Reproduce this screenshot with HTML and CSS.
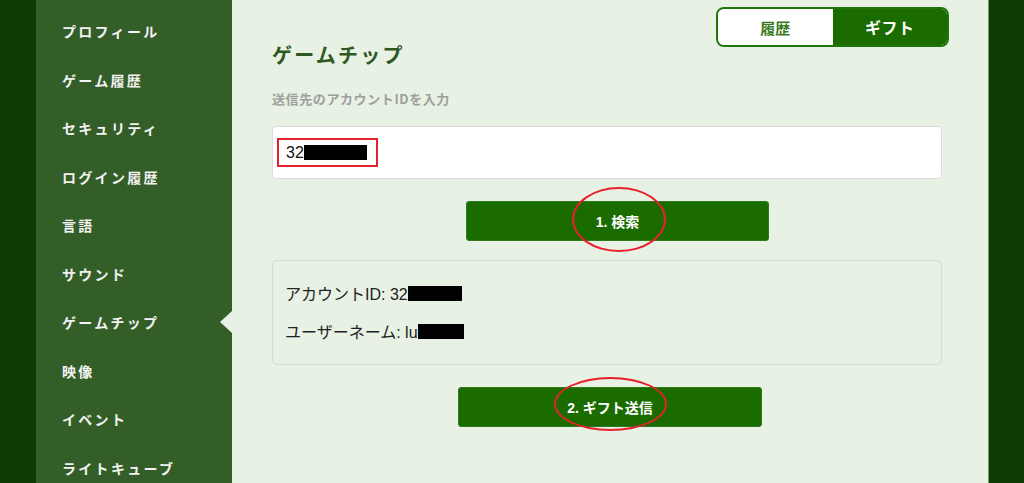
FILE: index.html
```html
<!DOCTYPE html>
<html lang="ja">
<head>
    <meta charset="UTF-8">
    <meta name="viewport" content="width=device-width, initial-scale=1.0">
    <title>ゲームチップ</title>
    <link rel="stylesheet" href="styles.css">
</head>
<body>
    <div class="page">
        <div class="edge"></div>

        <nav class="sidebar">
            <a class="nav-item">プロフィール</a>
            <a class="nav-item">ゲーム履歴</a>
            <a class="nav-item">セキュリティ</a>
            <a class="nav-item">ログイン履歴</a>
            <a class="nav-item">言語</a>
            <a class="nav-item">サウンド</a>
            <a class="nav-item active">ゲームチップ</a>
            <a class="nav-item">映像</a>
            <a class="nav-item">イベント</a>
            <a class="nav-item">ライトキューブ</a>
        </nav>

        <main class="main">
            <div class="main-head">
                <h1 class="title">ゲームチップ</h1>
                <div class="tabs">
                    <div class="tab">履歴</div>
                    <div class="tab tab-on">ギフト</div>
                </div>
            </div>

            <p class="label">送信先のアカウントIDを入力</p>

            <div class="id-input">
                <span class="marked">32<span class="redact redact-input"></span></span>
            </div>

            <button class="btn btn-search">
                1. 検索
                <span class="circle circle-search"></span>
            </button>

            <div class="result">
                <div class="result-row">アカウントID: 32<span class="redact redact-id"></span></div>
                <div class="result-row">ユーザーネーム: lu<span class="redact redact-name"></span></div>
            </div>

            <button class="btn btn-send">
                2. ギフト送信
                <span class="circle circle-send"></span>
            </button>
        </main>

        <div class="edge edge-right"></div>
    </div>
</body>
</html>
```

FILE: styles.css
```css
html, body {
    margin: 0;
    height: 100%;
    overflow: hidden;
}
body {
    font-family: "Liberation Sans", "Noto Sans CJK JP", sans-serif;
    background-color: #0e3a03;
}
.page {
    display: flex;
    height: 483px;
}
.edge {
    width: 36px;
    flex-shrink: 0;
    background-color: #0e3a03;
}
.edge-right {
    border-left: 1px solid #7d9a73;
    width: 35px;
}

/* sidebar */
.sidebar {
    width: 196px;
    flex-shrink: 0;
    background-color: #345e28;
    padding-top: 7px;
    box-sizing: border-box;
}
.nav-item {
    position: relative;
    display: flex;
    align-items: center;
    height: 48.5px;
    padding-left: 26px;
    color: #f2f2f2;
    font-family: "Noto Sans CJK JP", sans-serif;
    font-size: 14px;
    font-weight: bold;
    letter-spacing: 2.3px;
}
.nav-item.active::after {
    content: "";
    position: absolute;
    right: 0;
    top: 50%;
    margin-top: -11px;
    border-top: 11px solid transparent;
    border-bottom: 11px solid transparent;
    border-right: 12px solid #e7f1e4;
}

/* main */
.main {
    flex: 1;
    background-color: #e7f1e4;
    padding: 7px 46px 0 40px;
}
.main-head {
    display: flex;
    justify-content: space-between;
    align-items: flex-start;
}
.title {
    margin: 34px 0 0;
    font-family: "Noto Sans CJK JP", sans-serif;
    font-size: 20px;
    line-height: 28px;
    font-weight: bold;
    letter-spacing: 2.2px;
    color: #2e5a22;
}
.tabs {
    display: flex;
    width: 233px;
    height: 40px;
    box-sizing: border-box;
    margin-right: -7px;
    border: 2px solid #1e7409;
    border-radius: 8px;
    overflow: hidden;
}
.tab {
    flex: 1;
    display: flex;
    align-items: center;
    justify-content: center;
    background: white;
    color: #3a7a1c;
    font-family: "Noto Sans CJK JP", sans-serif;
    font-size: 15px;
    font-weight: bold;
}
.tab-on {
    background-color: #1a6b00;
    color: white;
    font-size: 16px;
    letter-spacing: 0.5px;
}
.label {
    margin: 20px 0 17px;
    font-family: "Noto Sans CJK JP", sans-serif;
    font-size: 13px;
    line-height: 20px;
    font-weight: bold;
    letter-spacing: 0.6px;
    color: #9d9f9c;
}
.id-input {
    display: flex;
    align-items: center;
    height: 53px;
    box-sizing: border-box;
    padding-left: 4px;
    background: white;
    border: 1px solid #dcdcdc;
    border-radius: 4px;
}
.marked {
    display: inline-flex;
    align-items: center;
    height: 29px;
    box-sizing: border-box;
    padding: 0 9px 0 7px;
    border: 2px solid #e3202b;
    font-size: 16px;
    color: #111;
}
.redact {
    display: inline-block;
    height: 15px;
    background: #000;
    vertical-align: middle;
}
.redact-input {
    width: 63px;
}
.redact-id {
    width: 54px;
}
.redact-name {
    width: 46px;
}

/* buttons */
.btn {
    position: relative;
    display: block;
    width: 303px;
    height: 40px;
    border: 1px solid #2f7a1c;
    border-radius: 3px;
    background-color: #1a6b00;
    color: white;
    font-family: "Liberation Sans", "Noto Sans CJK JP", sans-serif;
    font-size: 14px;
    font-weight: bold;
    cursor: pointer;
}
.btn-search {
    margin: 22px 0 19px 194px;
}
.btn-send {
    width: 304px;
    margin: 22px 0 0 186px;
}
.circle {
    position: absolute;
    border: 2.5px solid #e8202b;
    border-radius: 50%;
    pointer-events: none;
}
.circle-search {
    left: 105px;
    top: -15px;
    width: 90px;
    height: 61px;
}
.circle-send {
    left: 95px;
    top: -11px;
    width: 109px;
    height: 50px;
}

/* result box */
.result {
    padding: 13px 12px 14px;
    border: 1px solid #d6dbd4;
    border-radius: 5px;
}
.result-row {
    display: flex;
    align-items: center;
    height: 38px;
    font-size: 16px;
    color: #222;
}
```
